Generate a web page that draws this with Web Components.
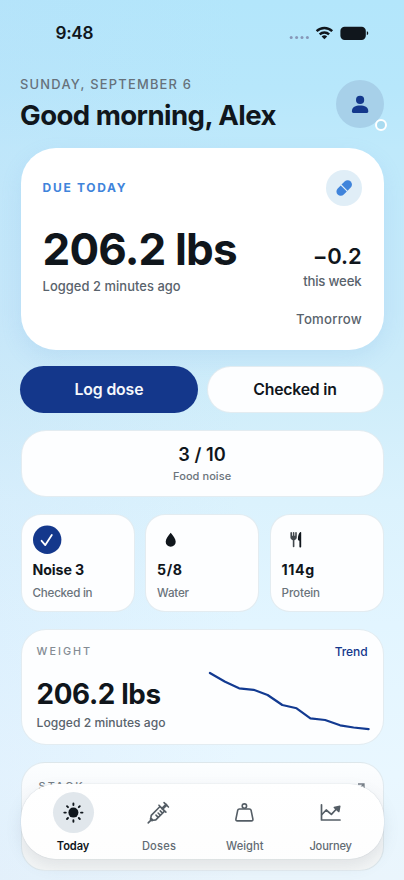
<!DOCTYPE html>
<html lang="en">
<head>
<meta charset="utf-8">
<title>Today</title>
<style>
html,body{margin:0;padding:0}
body{width:404px;height:880px;overflow:hidden;font-family:Inter,"Liberation Sans",sans-serif;color:#10161c}
</style>
</head>
<body>
<today-screen></today-screen>
<script>
const define=(name,html,after)=>{
  const t=document.createElement('template');
  t.innerHTML=html;
  customElements.define(name,class extends HTMLElement{
    connectedCallback(){
      if(!this.shadowRoot){
        this.attachShadow({mode:'open'}).appendChild(t.content.cloneNode(true));
        if(after)after(this);
      }
    }
  });
};

/* Single line of type: s = size, l = line height, wt = weight, w = tracked width, c = colour */
define('ui-text',`<style>:host{display:block;white-space:pre;flex:none}span{display:inline-block}</style><span><slot></slot></span>`,el=>{
  const a=n=>el.getAttribute(n);
  const sp=el.shadowRoot.querySelector('span');
  el.style.fontSize=a('s')+'px';
  el.style.lineHeight=el.style.height=a('l')+'px';
  el.style.fontWeight=a('wt')||450;
  if(a('c'))el.style.color=a('c');
  if(a('w')){
    const n=el.textContent.length;
    const ls=(parseFloat(a('w'))-sp.getBoundingClientRect().width)/(n-1);
    sp.style.letterSpacing=ls+'px';
    sp.style.marginRight=-ls+'px';
  }
});

define('status-bar',`<style>
:host{display:flex;height:66px;box-sizing:border-box;padding:22px 35px 0 55.500px;justify-content:space-between;align-items:flex-start}
svg{display:block}
</style>
<ui-text s="17.200" l="22" wt="600" w="38">9:48</ui-text>
<svg width="80" height="22" viewBox="0 0 80 22">
<g fill="#8797b8"><circle cx="2.200" cy="15.500" r="1.500"/><circle cx="7.600" cy="15.500" r="1.500"/><circle cx="13" cy="15.500" r="1.500"/><circle cx="18.400" cy="15.500" r="1.500"/></g>
<g fill="none" stroke="#10161c" stroke-width="2.400"><path d="M27.600 9.100a11.200 11.200 0 0 1 15.600 0"/><path d="M30.700 12.400a6.700 6.700 0 0 1 9.400 0"/></g>
<path d="M32.600 14.400a4.200 4.200 0 0 1 5.600 0L35.400 17.200z" fill="#10161c"/>
<rect x="51.400" y="4.700" width="25.400" height="13.200" rx="4.200" fill="#10161c"/><path d="M77.800 9.200c1.900.5 1.900 3.400 0 3.900z" fill="#10161c"/>
</svg>`);

define('user-avatar',`<style>
:host{display:block;position:relative;width:48px;height:48px;border-radius:50%;background:#a7d0e9}
svg{display:block}
i{position:absolute;left:39.200px;top:39.300px;width:8px;height:8px;border:2.200px solid #fff;border-radius:50%;background:#a9dbf0}
</style><svg width="48" height="48" viewBox="0 0 48 48"><circle cx="24.100" cy="19.900" r="4.100" fill="#14388c"/><path d="M15.900 31.200c0-4 3.700-5.600 8.200-5.600s8.200 1.600 8.200 5.600c0 1.100-.5 1.700-1.500 1.700H17.400c-1 0-1.500-.6-1.500-1.700z" fill="#14388c"/></svg><i></i>`);

define('page-header',`<style>
:host{display:flex;justify-content:space-between;height:82px;box-sizing:border-box;padding:9px 0 0;margin-left:-.6px}
user-avatar{margin-top:5px}
</style><div>
<ui-text s="12.900" l="20" wt="500" c="#66717a" w="171">SUNDAY, SEPTEMBER 6</ui-text>
<ui-text s="27.600" l="40" wt="680" w="256.500">Good morning, Alex</ui-text></div><user-avatar></user-avatar>`);

define('ui-card',`<style>
:host{display:block;box-sizing:border-box;background:#fdfeff;border:1px solid rgba(170,195,210,.3);border-radius:25px}
</style><slot></slot>`);

define('due-card',`<style>
:host{display:flex;flex-direction:column;height:202px;box-sizing:border-box;padding:22px 22px 0;border-radius:35px;background:#fff;box-shadow:0 8px 20px rgba(120,170,225,.17)}
.top{display:flex;justify-content:space-between;align-items:center;height:36px}
.mid{display:flex;justify-content:space-between;padding-top:17px}
.r{display:flex;flex-direction:column;align-items:flex-end}
.pill{width:36px;height:36px;border-radius:50%;background:#e0eef7}
svg{display:block}
</style>
<div class="top"><ui-text s="12" l="16" wt="680" c="#3f84db" w="83">DUE TODAY</ui-text>
<div class="pill"><svg width="36" height="36" viewBox="0 0 36 36"><g transform="rotate(-45 18.200 18)" fill="#3f84db"><path d="M17.600 13.700h-4.300a4.300 4.300 0 0 0 0 8.600h4.300z"/><path d="M18.700 13.700h4.400a4.300 4.300 0 0 1 0 8.600h-4.400z"/></g></svg></div></div>
<div class="mid"><div><ui-text s="44" l="52" wt="680" w="195">206.2 lbs</ui-text><ui-text s="12.900" l="24" c="#59636c" w="138">Logged 2 minutes ago</ui-text></div>
<div class="r"><ui-text s="22" l="25" wt="620" w="49" style="margin-top:21px">−0.2</ui-text><ui-text s="13.200" l="25" c="#59636c" w="58.500">this week</ui-text><ui-text s="13.200" l="20" wt="550" c="#59636c" w="65.500" style="margin-top:15px">Tomorrow</ui-text></div></div>`);

define('action-row',`<style>
:host{display:grid;grid-template-columns:178px 177px;justify-content:space-between;height:47px;margin-left:-.6px}
button{all:unset;box-sizing:border-box;display:flex;align-items:center;justify-content:center;padding-top:1px;border-radius:24px;background:#fdfeff;border:1px solid rgba(170,195,210,.3)}
.p{background:#14378b;border:0;color:#f6f8fb}
</style><button class="p"><ui-text s="15.800" l="20" wt="580" w="69">Log dose</ui-text></button><button><ui-text s="15.800" l="20" wt="580" w="83.500">Checked in</ui-text></button>`);

define('noise-card',`<style>:host{display:block}ui-card{height:67px;border-radius:25px}
div{display:flex;flex-direction:column;align-items:center;padding-top:13px}</style>
<ui-card><div><ui-text s="18.200" l="21" wt="560" w="47.500">3 / 10</ui-text><ui-text s="11" l="23" c="#6a737b" w="58">Food noise</ui-text></div></ui-card>`);

define('stat-tile',`<style>:host{display:block}ui-card{height:98px;border-radius:20px}
div{padding:10px 0 0 11px}::slotted(svg){display:block;width:30px;height:31px}</style>
<ui-card><div><slot name="icon"></slot><slot></slot></div></ui-card>`);

define('stat-row',`<style>:host{display:grid;grid-template-columns:repeat(3,114px);justify-content:space-between}</style>
<stat-tile><svg slot="icon" viewBox="0 0 30 31"><circle cx="14.200" cy="14.800" r="14.200" fill="#14388c"/><path d="M8.600 15.800l3.700 4.300 6.500-10.200" fill="none" stroke="#fff" stroke-width="1.800" stroke-linecap="round" stroke-linejoin="round"/></svg>
<ui-text s="14.200" l="28" wt="650" w="51.500">Noise 3</ui-text><ui-text s="11.600" l="19" c="#6a737b" w="60">Checked in</ui-text></stat-tile>
<stat-tile><svg slot="icon" viewBox="0 0 30 31"><path d="M13.700 7.800c2.400 3.100 5 5.900 5 8.900a5 5 0 0 1-10 0c0-3 2.600-5.800 5-8.900z" fill="#10161c"/></svg>
<ui-text s="14.200" l="28" wt="650" w="25">5/8</ui-text><ui-text s="11.600" l="19" c="#6a737b" w="32">Water</ui-text></stat-tile>
<stat-tile><svg slot="icon" viewBox="0 0 30 31"><path d="M9.200 7.800v4.600c0 1.100.7 1.600 1.400 1.900M14 7.800v4.600c0 1.100-.7 1.600-1.400 1.900M11.600 7.800v13.700" fill="none" stroke="#42484d" stroke-width="1.600" stroke-linecap="round"/><path d="M9.200 10.800h4.800v2l-1.300 1.500h-2.200L9.200 12.800z" fill="#42484d"/><path d="M19.200 7.600c0-.5-.4-.8-.8-.5-1.600 1-2.500 3.900-2.500 7 0 1 .4 1.500 1.500 1.600v5.800c0 1.300 1.800 1.300 1.800 0z" fill="#10161c"/></svg>
<ui-text s="14.200" l="28" wt="650" w="32.500">114g</ui-text><ui-text s="11.600" l="19" c="#6a737b" w="38.500">Protein</ui-text></stat-tile>`);

define('weight-card',`<style>:host{display:block}ui-card{height:116px}
.g{display:grid;grid-template-columns:1fr auto;padding:13px 15px 0}
.t{justify-self:end}svg{display:block;margin-top:8px;margin-right:-2px}</style>
<ui-card><div class="g"><ui-text s="10.800" l="18" wt="550" c="#848c94" w="53.500">WEIGHT</ui-text><ui-text class="t" s="12" l="18" wt="520" c="#14388c" w="33">Trend</ui-text>
<div><ui-text s="27.800" l="36" wt="680" w="124.500" style="margin-top:15px">206.2 lbs</ui-text><ui-text s="12.100" l="21" c="#59636c" w="129">Logged 2 minutes ago</ui-text></div>
<svg width="164" height="68" viewBox="205.400 669 164 68"><path d="M209.300 673l15.200 8.800L238.500 688.300l14.500 1.500 14 5.200 14.700 10 14.300 3.300 13.800 10 14.700 1.700 15 5.300 13.500 2.200L368 729.200" fill="none" stroke="#123a91" stroke-width="2.200" stroke-linecap="round" stroke-linejoin="round"/></svg></div></ui-card>`);

define('stack-card',`<style>:host{display:block}ui-card{height:109px;border-radius:24px;background:linear-gradient(#fcfeff 0,#f8fafc 25%,#f3f5f6 80%,#f4f6f6 100%)}
div{display:flex;justify-content:space-between;padding:15px 18px 0 17px}svg{display:block;margin-top:4.500px}</style>
<ui-card><div><ui-text s="10.800" l="17" wt="500" c="#757e86" w="44">STACK</ui-text><svg width="8" height="9" viewBox="0 0 8 9"><path d="M1 1h6v6M7 1L1 7" fill="none" stroke="#757e86" stroke-width="1.300"/></svg></div></ui-card>`);

define('tab-item',`<style>:host{display:flex;flex-direction:column;align-items:center;color:#626b73}
div{width:41px;height:41px;border-radius:50%}:host([active]) div{background:#e1e7ec}:host([active]){color:#10161c}
::slotted(svg){display:block;width:41px;height:41px}</style><div><slot name="icon"></slot></div><slot></slot>`);

define('tab-bar',`<style>
:host{position:absolute;left:20.600px;top:784px;width:363px;height:75px;box-sizing:border-box;padding:8px 10px 0 9.500px;border-radius:35px;background:linear-gradient(rgba(255,255,255,.985),rgba(254,254,254,.96));box-shadow:0 0 1px rgba(90,110,130,.45),0 7px 16px rgba(90,105,120,.13);display:grid;grid-template-columns:repeat(4,1fr)}
ui-text{margin-top:4px}
</style>
<tab-item active><svg slot="icon" viewBox="0 0 41 41"><circle cx="20.400" cy="20.600" r="5" fill="#10161c"/><g stroke="#10161c" stroke-width="1.900" stroke-linecap="round"><path d="M20.400 11.500v1.500M20.400 28.200v1.500M11.300 20.600h1.500M28 20.600h1.500M14 14.200l1 1M25.800 26l1 1M14 27l1-1M25.800 15.200l1-1"/></g></svg><ui-text s="11.100" l="18" wt="620" w="32.500">Today</ui-text></tab-item>
<tab-item><svg slot="icon" viewBox="0 0 41 41"><g transform="translate(19.900 21.200) rotate(45)" fill="none" stroke="#545d65" stroke-width="1.600" stroke-linecap="round" stroke-linejoin="round"><path d="M-3.200-6.200h6.400V6.200L1.600 8.400h-3.200L-3.200 6.200zM-4.900-6.400H4.900M-3.100-11.800h6.200M0 8.700v5M0-3.300h2.800M0-.3h2.800M0 2.700h2.800"/><path d="M0-6.600v-5" stroke-width="2.600"/><path d="M-1 9.300h2" stroke-width="2"/></g></svg><ui-text s="11.100" l="18" w="34">Doses</ui-text></tab-item>
<tab-item><svg slot="icon" viewBox="0 0 41 41"><g fill="none" stroke="#545d65" stroke-width="1.600" stroke-linejoin="round"><circle cx="20.400" cy="14.100" r="2.200"/><path d="M15.400 17h10c1 0 1.500.5 1.700 1.300l1.800 8.900c.2 1-.4 1.700-1.400 1.700H13.300c-1 0-1.600-.7-1.400-1.700l1.800-8.900c.2-.8.7-1.300 1.700-1.300z"/></g></svg><ui-text s="11.100" l="18" w="37.500">Weight</ui-text></tab-item>
<tab-item><svg slot="icon" viewBox="0 0 41 41"><g fill="none" stroke="#545d65" stroke-width="1.700" stroke-linecap="round" stroke-linejoin="round"><path d="M11.500 12.800v15.200h18.500"/><path d="M11.900 22.500l4.300-4.500 5.200 4.300 5-5.300"/></g><path d="M29.900 14.200l-1 5.500-4.700-4.200z" fill="#545d65" stroke="#545d65" stroke-width="1.300" stroke-linejoin="round"/></svg><ui-text s="11.100" l="18" w="42.500">Journey</ui-text></tab-item>`);

define('today-screen',`<style>
:host{display:block;position:relative;width:404px;height:880px;overflow:hidden;background:linear-gradient(90deg,rgba(190,215,245,.16),rgba(190,215,245,0) 60%),linear-gradient(#b3e6fb 0,#b7e7fb 10%,#bfe9fb 17%,#c6e9fa 35%,#cfedfa 45%,#dbf2fd 57%,#e2f5ff 71%,#e9f7ff 88%,#eaf5fc 100%)}
main{display:flex;flex-direction:column;padding:0 20.400px 0 20.600px}
</style>
<status-bar></status-bar>
<main><page-header></page-header><due-card></due-card>
<action-row style="margin-top:16px"></action-row>
<noise-card style="margin-top:17px"></noise-card>
<stat-row style="margin-top:17px"></stat-row>
<weight-card style="margin-top:17px"></weight-card>
<stack-card style="margin-top:17px"></stack-card></main>
<tab-bar></tab-bar>`);
</script>
</body>
</html>
